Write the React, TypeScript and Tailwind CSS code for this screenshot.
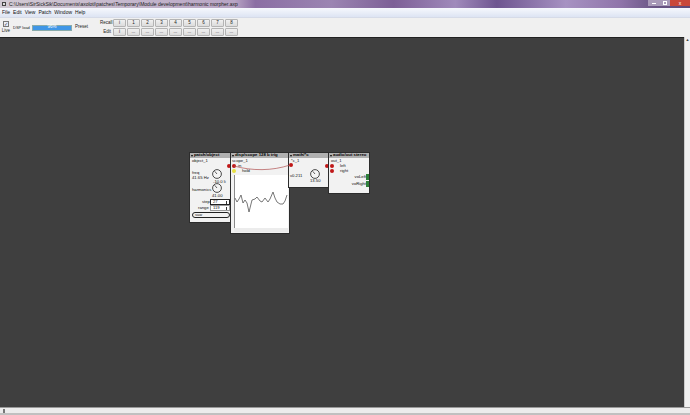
const font = "font-['Liberation_Sans',Arial,sans-serif]";

function ToolButton({ label }: { label: string }) {
  return (
    <div className="flex h-[8px] w-[13px] items-center justify-center rounded-[1px] border border-[#b4b4b4] bg-[linear-gradient(#f0f0f0,#dcdcdc)] text-[4.5px] leading-none text-[#222]">
      {label}
    </div>
  );
}

function Header({ title }: { title: string }) {
  return (
    <div className="flex h-[5px] items-center gap-[1px] bg-[#b0b0b0] pl-[1px] text-[4.3px] font-bold leading-none text-black">
      <span className="h-0 w-0 border-x-[1.5px] border-t-[2px] border-x-transparent border-t-black" />
      <span className="whitespace-nowrap">{title}</span>
    </div>
  );
}

function Dial({ className }: { className: string }) {
  return (
    <svg viewBox="0 0 10 10" className={`absolute h-[10px] w-[10px] ${className}`}>
      <circle cx="5" cy="5" r="4.4" fill="#f4f4f4" stroke="#222" strokeWidth="0.8" />
      <line x1="5" y1="5" x2="2.6" y2="2.2" stroke="#222" strokeWidth="0.7" />
    </svg>
  );
}

function Pin({ className }: { className: string }) {
  return <div className={`absolute h-[4px] w-[4px] rounded-full bg-[#c01818] ${className}`} />;
}

function Label({ className, children }: { className: string; children: string }) {
  return <div className={`absolute whitespace-nowrap text-[4.2px] font-medium leading-none text-[#111] ${className}`}>{children}</div>;
}

function Spinner({ className, value }: { className: string; value: string }) {
  return (
    <div className={`absolute flex h-[6px] w-[20px] items-center justify-between border bg-white px-[2px] text-[4.2px] leading-none text-[#111] ${className}`}>
      <span>{value}</span>
      <span className="h-[3px] w-[1.5px] bg-[#333]" />
    </div>
  );
}

const boxClass = "absolute top-[115px] bg-[#f2f2f2] shadow-[0_0_0_1px_#2c2c2c]";

export default function App() {
  const buttons = ["1", "2", "3", "4", "5", "6", "7", "8"];
  return (
    <div className={`flex h-[415px] w-[690px] flex-col overflow-hidden bg-[#f0f0f0] ${font}`}>
      {/* title bar */}
      <div className="flex h-[8px] shrink-0 items-start justify-between bg-[linear-gradient(90deg,#d2cad4_0%,#c4b6cc_20%,#b8a4c4_34%,#8b6ea3_37%,#9b85b2_48%,#7d5f96_57%,#a08abb_66%,#6e5590_72%,#a792c2_82%,#8f74a9_90%,#6a5585_95%,#5f4a78_100%)] pl-[2px]">
        <div className="flex h-[8px] items-center gap-[3px]">
          <span className="h-[4px] w-[4px] border border-[#444] bg-[#ddd]" />
          <span className="whitespace-nowrap text-[5px] leading-none text-[#1a1a1a]">
            C:\Users\SirSickSik\Documents\axoloti\patches\Temporary\Module development\harmonic morpher.axp
          </span>
        </div>
        <div className="flex h-[6px] items-center">
          <div className="flex h-full w-[12px] items-center justify-center bg-[#a99ab8]"><span className="h-[1px] w-[4px] bg-white" /></div>
          <div className="flex h-full w-[10px] items-center justify-center bg-[#a99ab8]"><span className="h-[4px] w-[4px] border border-white" /></div>
          <div className="flex h-full w-[20px] items-center justify-center bg-[#c9483a] text-[5px] leading-none text-white">x</div>
        </div>
      </div>

      {/* menu */}
      <div className="flex h-[9px] shrink-0 items-center gap-[3px] bg-[linear-gradient(#f6f8fd,#dde4f3)] pl-[2px] text-[5px] leading-none text-[#111]">
        <span>File</span><span>Edit</span><span>View</span><span>Patch</span><span>Window</span><span>Help</span>
      </div>

      {/* toolbar */}
      <div className="flex h-[20px] shrink-0 items-center border-t border-[#d6dbe8] bg-[#f0f0f0] text-[4.5px] leading-none text-[#222]">
        <div className="ml-[1px] flex w-[10px] flex-col items-center gap-[2px]">
          <div className="flex h-[6px] w-[6px] items-center justify-center border border-[#777] bg-[#e8eef8] text-[5px] text-[#334]">✓</div>
          <span>Live</span>
        </div>
        <span className="ml-[2px] w-[18px] whitespace-nowrap text-[4px]">DSP load</span>
        <div className="ml-[1px] flex h-[6px] w-[40px] items-center justify-center border border-[#8aa] bg-[#3f96e6] text-[4.5px] text-white">96%</div>
        <span className="ml-[3px] w-[13px] whitespace-nowrap">Preset</span>
        <div className="ml-[12px] flex flex-col gap-[1px]">
          <div className="flex items-center gap-[1px]">
            <span className="mr-[1px] w-[11px] text-right">Recall</span>
            <ToolButton label="i" />
            {buttons.map((b) => <ToolButton key={b} label={b} />)}
          </div>
          <div className="flex items-center gap-[1px]">
            <span className="mr-[1px] w-[11px] text-right">Edit</span>
            <ToolButton label="i" />
            {buttons.map((b) => <ToolButton key={b} label="..." />)}
          </div>
        </div>
      </div>

      {/* canvas + scrollbars */}
      <div className="flex min-h-0 flex-1">
        <div className="relative flex-1 border-t border-[#222] bg-[#3f3f3f]">
          {/* patch/object */}
          <div className={`${boxClass} left-[190px] h-[69px] w-[41px]`}>
            <Header title="patch/object" />
            <Label className="left-[2px] top-[6px]">object_1</Label>
            <Label className="left-[2px] top-[18px]">freq</Label>
            <Label className="left-[2px] top-[23px]">41.65 Hz</Label>
            <Dial className="left-[22px] top-[16px]" />
            <Label className="left-[23px] top-[27px]">-10.0 li</Label>
            <Label className="left-[2px] top-[35px]">harmonics</Label>
            <Dial className="left-[22px] top-[30px]" />
            <Label className="left-[22px] top-[41px]">41.00</Label>
            <Label className="left-[12px] top-[47px]">step</Label>
            <Spinner className="left-[20px] top-[46px] border-[#222]" value="27" />
            <Label className="left-[8px] top-[53px]">range</Label>
            <Spinner className="left-[20px] top-[52px] border-[#999]" value="119" />
            <div className="absolute left-[2px] top-[59px] flex h-[6px] w-[38px] items-center rounded-full border border-[#222] pl-[2px] text-[4px] leading-none text-[#222]">saw</div>
            <Pin className="left-[37px] top-[11px]" />
          </div>

          {/* scope */}
          <div className={`${boxClass} left-[231px] h-[80px] w-[58px]`}>
            <Header title="disp/scope 128 b trig" />
            <Label className="left-[1px] top-[6px]">scope_1</Label>
            <Pin className="left-[1px] top-[11px]" />
            <Label className="left-[7px] top-[11px]">in</Label>
            <div className="absolute left-[1px] top-[16px] h-[4px] w-[4px] rounded-full bg-[#e8e040]" />
            <Label className="left-[11px] top-[16px]">hold</Label>
            <div className="absolute bottom-[1px] left-[3px] top-[22px] w-[54px] bg-white">
              <svg viewBox="0 0 54 57" className="h-full w-full">
                <rect x="0" y="53" width="54" height="4" fill="#ececec" />
                <line x1="0.5" y1="0" x2="0.5" y2="53" stroke="#8a8a8a" strokeWidth="1" />
                <polyline
                  fill="none"
                  stroke="#555"
                  strokeWidth="0.8"
                  points="1,23 3,27 5,24 7,20 9,28 11,25 13,28 15,37 17,29 18,25 21,24 23,22 26,26 28,27 31,23 34,27 36,24 39,17 41,23 43,27 46,29 49,29 51,26 53,20"
                />
              </svg>
            </div>
          </div>

          {/* math */}
          <div className={`${boxClass} left-[289px] h-[34px] w-[40px]`}>
            <Header title="math/*c" />
            <Label className="left-[2px] top-[6px]">*c_1</Label>
            <Pin className="left-[0px] top-[10px]" />
            <Label className="left-[1px] top-[21px]">v0.211</Label>
            <Dial className="left-[21px] top-[16px]" />
            <Label className="left-[21px] top-[26px]">13.50</Label>
            <Pin className="left-[36px] top-[11px]" />
          </div>

          {/* audio out */}
          <div className={`${boxClass} left-[329px] h-[40px] w-[40px]`}>
            <Header title="audio/out stereo" />
            <Label className="left-[2px] top-[6px]">out_1</Label>
            <Pin className="left-[1px] top-[11px]" />
            <Pin className="left-[1px] top-[16px]" />
            <Label className="left-[11px] top-[11px]">left</Label>
            <Label className="left-[11px] top-[16px]">right</Label>
            <Label className="right-[3px] top-[22px]">voLeft</Label>
            <Label className="right-[3px] top-[29px]">voRight</Label>
            <div className="absolute right-0 top-[21px] flex h-[13px] w-[3px] flex-col gap-[1px]">
              <span className="flex-1 bg-[#2f7f3a]" />
              <span className="flex-1 bg-[#2f7f3a]" />
            </div>
          </div>

          {/* wire from scope in to the gain */}
          <svg className="pointer-events-none absolute left-[232px] top-[122px] h-[15px] w-[60px]" viewBox="0 0 60 15">
            <path d="M2,6 C20,11 40,11 58,5" fill="none" stroke="#b05050" strokeWidth="0.7" />
          </svg>
        </div>
        <div className="flex w-[6px] shrink-0 flex-col items-center border-l border-[#ccc] bg-[#f0f0f0] pt-[1px] text-[4px] leading-none text-[#444]">▲</div>
      </div>
      <div className="flex h-[8px] shrink-0 items-center border-t border-[#999] border-b-2 border-b-[#c0c0c0] bg-[#ececec] pl-[3px]">
        <div className="h-[4px] w-[2px] bg-[#777]" />
      </div>
    </div>
  );
}
